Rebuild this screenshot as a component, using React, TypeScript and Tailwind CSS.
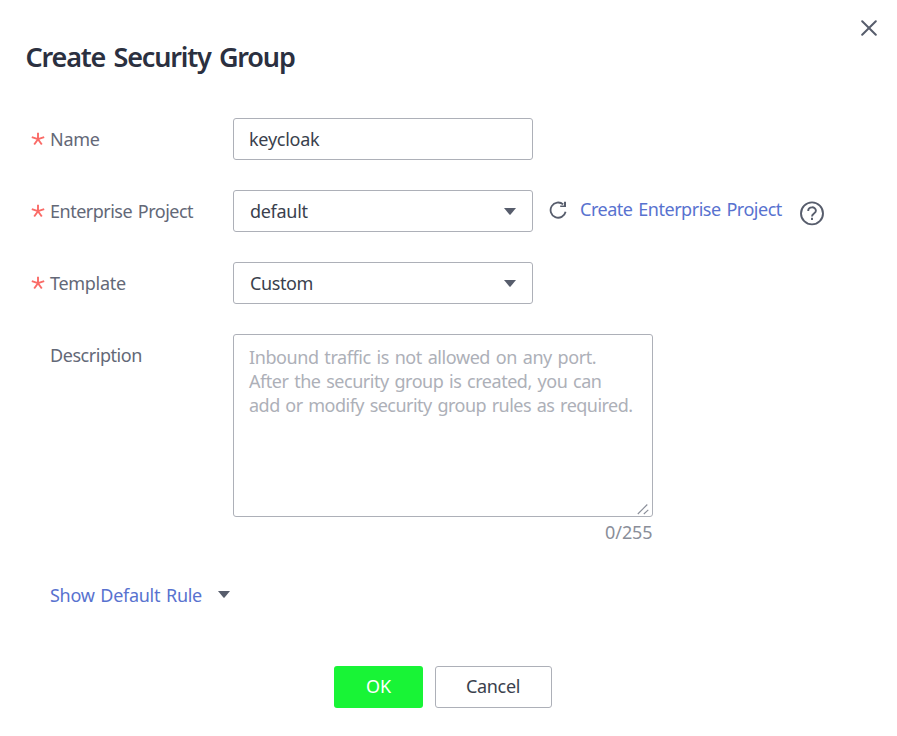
import React from "react";

function Caret({ className = "" }: { className?: string }) {
  return (
    <svg width="12" height="7" viewBox="0 0 12 7" className={`shrink-0 ${className}`} aria-hidden="true">
      <path d="M0 0H12L6.6 6.5Q6 7.1 5.4 6.5Z" fill="#575d6c" />
    </svg>
  );
}

function Label({ text, required, className = "" }: { text: string; required?: boolean; className?: string }) {
  return (
    <div className="flex h-[42px] w-[202px] shrink-0 items-center text-[#636877]">
      <span className="flex w-[19px] shrink-0">
        {required && (
          <svg width="14" height="14" viewBox="0 0 14 14" fill="none" stroke="#fa6b67" strokeWidth="1.9" aria-hidden="true">
            <path d="M7 7.2V.7M7 7.2L.8 5.2M7 7.2L13.2 5.2M7 7.2L3.2 12.5M7 7.2L10.8 12.5" />
          </svg>
        )}
      </span>
      <span className={`whitespace-nowrap ${className}`}>{text}</span>
    </div>
  );
}

function Select({ value, className = "" }: { value: string; className?: string }) {
  return (
    <button className="flex h-[42px] w-[300px] shrink-0 items-center justify-between rounded-[3px] border border-[#adb0b8] pr-4 pl-4 text-[#3a3f4d]">
      <span className={className}>{value}</span>
      <Caret />
    </button>
  );
}

export default function App() {
  return (
    <main className="relative h-[736px] w-[897px] overflow-hidden bg-white pt-[37px] font-['Noto_Sans',sans-serif] text-[18px] leading-6">
      <button aria-label="Close" className="absolute top-5 right-5">
        <svg width="16" height="16" viewBox="0 0 16 16" stroke="#575d6c" strokeWidth="2" strokeLinecap="round">
          <path d="M1.2 1.2L14.8 14.8M14.8 1.2L1.2 14.8" />
        </svg>
      </button>
      <h1 className="ml-[25.5px] h-10 w-max text-[27px] leading-10 font-semibold tracking-[-1.18px] whitespace-nowrap text-[#2b3040] [word-spacing:2.5px]">Create Security Group</h1>
      <form className="mt-[41px] ml-[31px] flex flex-col gap-[30px]" onSubmit={(e) => e.preventDefault()}>
        <div className="flex">
          <Label text="Name" required className="tracking-[-0.3px]" />
          <input defaultValue="keycloak" className="h-[42px] w-[300px] rounded-[3px] border border-[#adb0b8] px-[15px] tracking-[-0.25px] text-[#3a3f4d] outline-none" />
        </div>
        <div className="flex">
          <Label text="Enterprise Project" required className="tracking-[-0.5px] [word-spacing:1.5px]" />
          <Select value="default" className="tracking-[-0.3px]" />
          <svg width="18" height="18" viewBox="0 0 18 18" fill="none" stroke="#575d6c" strokeWidth="1.8" className="mt-[11px] ml-4 shrink-0">
            <path d="M16.6 10.8A7.6 7.6 0 1 1 14.2 3.4" />
            <path d="M17 .8V6H11.2V4.4H15V.8Z" fill="#575d6c" stroke="none" />
          </svg>
          <a className="mt-[7px] ml-[13px] w-[219px] shrink-0 tracking-[-0.47px] whitespace-nowrap text-[#5872cf] [word-spacing:1.5px]">Create Enterprise Project</a>
          <svg width="26" height="26" viewBox="0 0 26 26" fill="none" stroke="#575d6c" strokeWidth="1.9" className="mt-[10px] shrink-0">
            <circle cx="13" cy="13.4" r="11" />
            <path d="M9.2 11C9.2 6.1 16.9 6.2 16.9 10.7C16.9 13.4 13 13.6 13 16.4M13 17.8V19.9" />
          </svg>
        </div>
        <div className="flex">
          <Label text="Template" required className="tracking-[-0.3px]" />
          <Select value="Custom" className="tracking-[-0.4px]" />
        </div>
        <div className="flex">
          <Label text="Description" className="tracking-[-0.45px]" />
          <div className="w-[420px]">
            <div role="textbox" aria-multiline="true" className="relative h-[183px] rounded-[3px] border border-[#adb0b8] px-[15px] py-[10px] whitespace-nowrap text-[#adb0b8]">
              <p className="tracking-[-0.42px] [word-spacing:1.5px]">Inbound traffic is not allowed on any port.</p>
              <p className="tracking-[-0.47px] [word-spacing:1.5px]">After the security group is created, you can</p>
              <p className="tracking-[-0.52px] [word-spacing:1.5px]">add or modify security group rules as required.</p>
              <svg width="12" height="12" viewBox="0 0 12 12" className="absolute right-[3px] bottom-[1px]" stroke="#8a8e99" strokeWidth="1.1">
                <path d="M.8 11L10.3 1.5M6.8 11L11.3 6.8" />
              </svg>
            </div>
            <div className="mt-[3px] mb-px pr-[0.5px] text-right tracking-[-0.1px] text-[#8a8e99]">0/255</div>
          </div>
        </div>
      </form>
      <div className="mt-[38px] ml-[50px] flex items-center text-[#5872cf]">
        <span className="w-[168px] tracking-[-0.3px] whitespace-nowrap [word-spacing:1.5px]">Show Default Rule</span>
        <Caret className="-mt-[2px]" />
      </div>
      <div className="mt-[59px] ml-[334px] flex gap-3">
        <button className="h-[42px] w-[89px] rounded-[3px] bg-[#18f436] pb-[2px] tracking-[-0.2px] text-white">OK</button>
        <button className="h-[42px] w-[117px] rounded-[3px] border border-[#adb0b8] pr-[1px] pb-[2px] tracking-[-0.3px] text-[#3a3f4d]">Cancel</button>
      </div>
    </main>
  );
}
